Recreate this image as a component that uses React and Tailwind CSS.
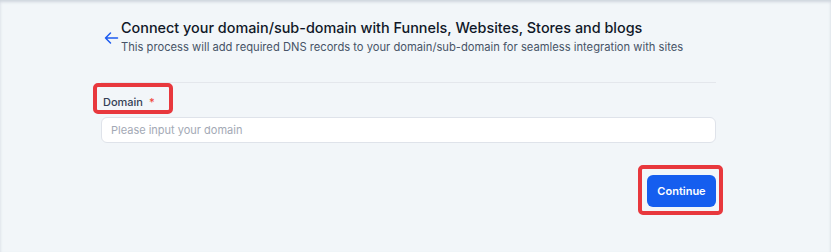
import React from 'react';

const App = () => {
  return (
    <div className="min-h-[252px] bg-[#f2f6f9] shadow-[inset_0_2px_3px_rgba(100,116,139,0.25)] font-['Inter',sans-serif]">
      <div className="ml-[101px] w-[615px] pt-[18px]">
        <header className="flex items-center gap-[2px]">
          <svg width="16" height="16" viewBox="0 0 16 16" fill="none" className="ml-[2px] mt-[3px] shrink-0">
            <path d="M14.5 8H2.5M7.5 3L2.5 8L7.5 13" stroke="#1d5bf0" strokeWidth="1.5" strokeLinecap="round" strokeLinejoin="round" />
          </svg>
          <div>
            <h1 className="text-[14.4px] leading-[20px] font-medium text-[#101828]">
              Connect your domain/sub-domain with Funnels, Websites, Stores and blogs
            </h1>
            <p className="mt-[2px] text-[11.2px] leading-[14px] text-[#475467]">
              This process will add required DNS records to your domain/sub-domain for seamless integration with sites
            </p>
          </div>
        </header>

        <div className="mt-[28px] h-px bg-[#e4e7ec]" />

        <div className="mt-[11px] relative w-fit">
          <label className="block text-[11px] leading-[16px] font-medium text-[#344054] pl-[2px]">
            Domain <span className="text-[#f04438] ml-[3px]">*</span>
          </label>
          <div className="absolute left-[-8px] top-[-11px] w-[80px] h-[31px] border-4 border-[#e8383d] rounded-[5px]" />
        </div>

        <input
          type="text"
          placeholder="Please input your domain"
          className="mt-[7px] w-full h-[26px] rounded-[6px] border border-[#dfe3ea] bg-white px-[9px] text-[11px] text-[#101828] placeholder:text-[#a3a9b5] outline-none"
        />

        <div className="mt-[32px] flex justify-end">
          <div className="relative">
            <button className="w-[69px] h-[32px] rounded-[6px] bg-[#155eef] text-white text-[11px] font-semibold">
              Continue
            </button>
            <div className="absolute left-[-9px] top-[-10px] w-[85px] h-[50px] border-4 border-[#e8383d] rounded-[5px]" />
          </div>
        </div>
      </div>
    </div>
  );
};

export default App;
